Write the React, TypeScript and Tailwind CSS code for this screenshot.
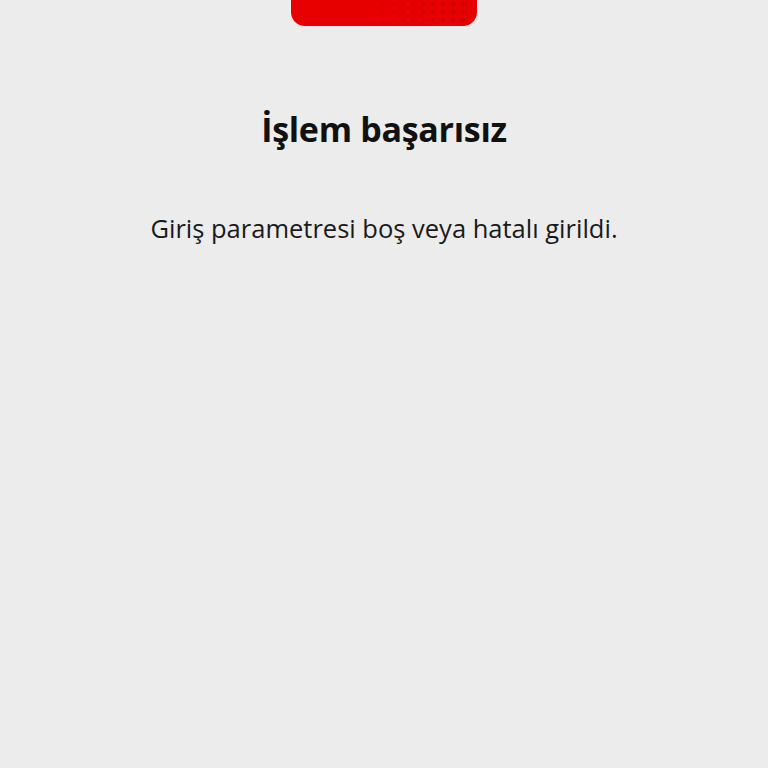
import React from 'react';

const Dots: React.FC = () => {
    const cols = Array.from({ length: 9 });
    const rows = Array.from({ length: 3 });
    return (
        <svg className="absolute right-2 top-0" width="92" height="24" viewBox="0 0 92 24">
            {rows.map((_, r) =>
                cols.map((_, c) => (
                    <circle key={`${r}-${c}`} cx={6 + c * 10} cy={4 + r * 8} r={1.4 + c * 0.12} fill="#c00000" opacity={0.3 + c * 0.05} />
                ))
            )}
        </svg>
    );
};

export default function App() {
    return (
        <div className="min-h-[768px] w-full bg-[#ececec] flex flex-col items-center" style={{ fontFamily: '"Open Sans", "Noto Sans", sans-serif' }}>
            <div className="relative w-[186px] h-[26px] bg-[#e60000] rounded-b-[14px] overflow-hidden">
                <Dots />
            </div>
            <h1 className="mt-[83px] text-[34px] leading-[40px] font-bold text-[#111111] tracking-[-0.3px]">İşlem başarısız</h1>
            <p className="mt-[62px] text-[25.5px] leading-[34px] text-[#1a1a1a]">Giriş parametresi boş veya hatalı girildi.</p>
        </div>
    );
}
